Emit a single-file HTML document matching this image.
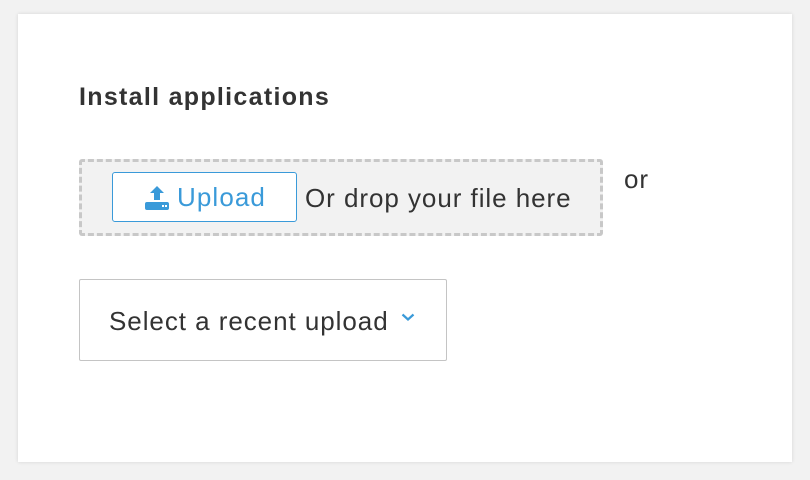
<!DOCTYPE html>
<html><head><style>
body{margin:0;width:810px;height:480px;background:#f2f2f2;font-family:"Liberation Sans",sans-serif;position:relative;overflow:hidden}
.card{position:absolute;left:18px;top:14px;width:774px;height:448px;background:#fff;box-shadow:0 0 4px rgba(0,0,0,.12)}
h1{position:absolute;left:79px;top:83px;margin:0;font-size:25px;letter-spacing:1.3px;font-weight:bold;color:#333}
.drop{position:absolute;left:79px;top:159px;width:518px;height:71px;border:3px dashed #c8c8c8;border-radius:3px;background:#f2f2f2}
.btn{position:absolute;left:112px;top:172px;width:183px;height:48px;border:1.5px solid #3a9ad9;border-radius:3px;background:#fff;color:#3a9ad9;font-size:26px;line-height:48px;letter-spacing:1.1px}
.btn svg{position:absolute;left:31px;top:12px}
.btn span{position:absolute;left:64px;top:0}
.t{position:absolute;font-size:26px;color:#333;letter-spacing:0.95px}
.sel{position:absolute;left:79px;top:279px;width:366px;height:80px;border:1.5px solid #c4c4c4;border-radius:2px;background:#fff}
</style></head><body>
<div class="card"></div>
<h1>Install applications</h1>
<div class="drop"></div>
<div class="btn"><svg width="26" height="26" viewBox="0 0 26 26"><path d="M13 1 L20 8 H16 V15 H10 V8 H6 Z" fill="#3a9ad9"/><rect x="1" y="17" width="24" height="8" rx="2" fill="#3a9ad9"/><rect x="18" y="20" width="2" height="2" fill="#fff"/><rect x="21" y="20" width="2" height="2" fill="#fff"/></svg><span>Upload</span></div>
<div class="t" style="left:305px;top:183px">Or drop your file here</div>
<div class="t" style="left:624px;top:164px">or</div>
<div class="sel"></div>
<div class="t" style="left:109px;top:306px">Select a recent upload</div>
<svg style="position:absolute;left:401px;top:313px" width="14" height="9" viewBox="0 0 14 9"><path d="M1.5 1.5 L7 6.5 L12.5 1.5" stroke="#3a9ad9" stroke-width="2.2" fill="none"/></svg>
</body></html>
